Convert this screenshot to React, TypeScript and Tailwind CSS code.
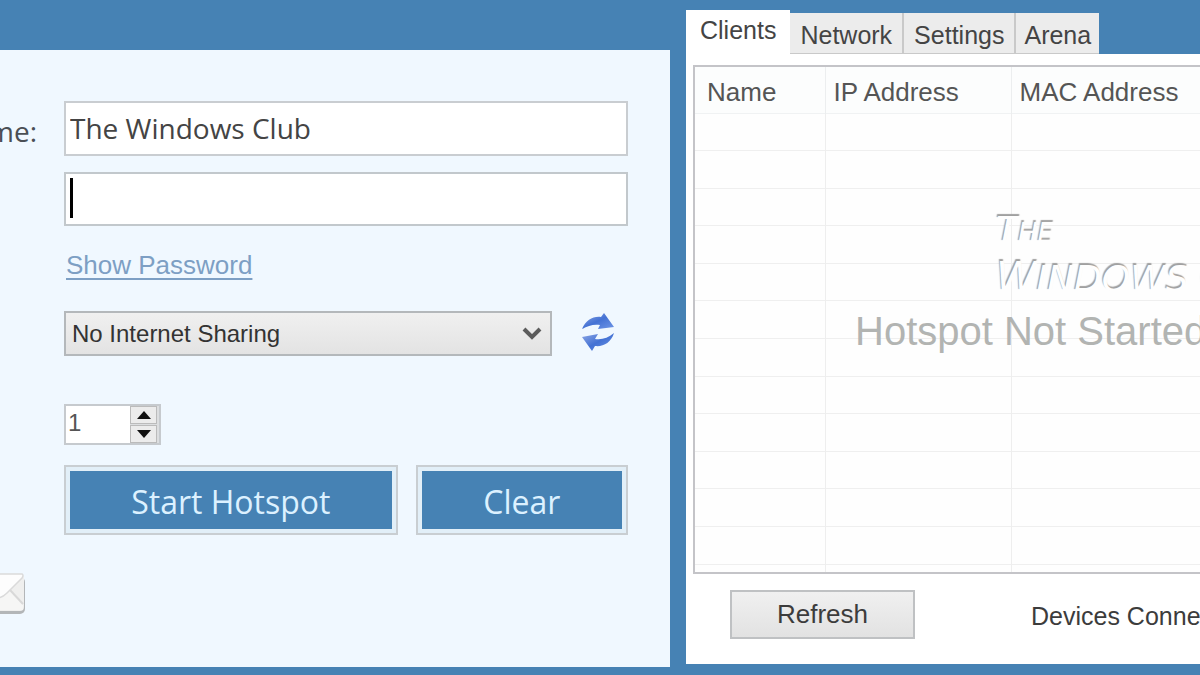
import { useState } from 'react'

const tabs = ['Clients', 'Network', 'Settings', 'Arena']
const emptyRows = Array.from({ length: 12 }, (_, i) => i)

const RefreshArrows = () => (
  <svg viewBox="0 0 36 40" className="h-10 w-9" aria-hidden="true">
    <defs>
      <linearGradient id="arrows" x1="0" y1="0" x2="1" y2="1">
        <stop offset="0" stopColor="#8fa8e6" />
        <stop offset="0.5" stopColor="#4472d4" />
        <stop offset="1" stopColor="#6f96e6" />
      </linearGradient>
    </defs>
    <path
      d="M2 17C6 8 13 4 21 5L24 1L34 15L18 17L20 13C13 12 8 14 2 17Z"
      fill="url(#arrows)"
    />
    <path
      d="M34 21C31 31 23 35 15 34L12 39L2 25L18 22L15 27C22 28 28 26 34 21Z"
      fill="url(#arrows)"
    />
  </svg>
)

const Envelope = () => (
  <svg viewBox="0 0 58 44" className="h-11 w-[58px] shrink-0" aria-hidden="true">
    <rect x="2" y="4" width="55" height="37" rx="5" fill="#b3b6b8" />
    <rect x="1" y="1" width="55" height="37" rx="4" fill="#efefee" />
    <path d="M2 37L18 17L42 17L55 32V37Z" fill="#f6f6f5" />
    <path d="M42 17L55 31" stroke="#d8d8d8" strokeWidth="2" fill="none" />
    <path
      d="M3 1H54Q56 2 54 5L39 20Q34 25 29 25Q24 25 19 20L3 5Z"
      fill="#fdfdfd"
      stroke="#dadada"
      strokeWidth="1.5"
    />
  </svg>
)

const HotspotForm = () => {
  const [name, setName] = useState('The Windows Club')
  const [password, setPassword] = useState('')
  const [limit, setLimit] = useState(1)

  return (
    <form
      className="mt-[50px] flex flex-col bg-[#f0f8ff] pt-[51px]"
      onSubmit={(e) => e.preventDefault()}
    >
      <div className="mr-[42px] flex flex-col">
        <div className="flex items-center">
          <label
            htmlFor="hotspot-name"
            className="mr-[27px] flex w-[37px] shrink-0 justify-end pt-1 font-['Open_Sans',sans-serif] text-[28px] text-[#4a4f55]"
          >
            Name:
          </label>
          <input
            id="hotspot-name"
            value={name}
            onChange={(e) => setName(e.target.value)}
            className="h-[55px] min-w-0 flex-1 border-2 border-[#c9cdd1] bg-white px-1 pb-0.5 font-['Open_Sans',sans-serif] text-[28px] text-[#444] outline-none"
          />
        </div>

        <div className="relative mt-4 ml-16">
          <input
            aria-label="Password"
            type="password"
            value={password}
            onChange={(e) => setPassword(e.target.value)}
            className="block h-[54px] w-full border-2 border-[#c2c8cc] bg-white px-1 text-[26px] outline-none"
          />
          <span className="absolute top-1.5 left-1.5 h-10 w-[3px] bg-black" />
        </div>

        <a
          href="#password"
          className="mt-6 ml-16 self-start pl-0.5 text-[26px] leading-[30px] text-[#7d9fc4] underline decoration-2 underline-offset-4"
        >
          Show Password
        </a>

        <div className="mt-[31px] ml-16 flex items-center">
          <div className="relative w-[488px]">
            <select
              aria-label="Internet sharing"
              className="block h-[45px] w-full appearance-none border-2 border-[#b4b8bb] bg-linear-to-b from-[#f0f0f0] to-[#e3e3e3] px-1.5 text-[24px] text-[#333]"
            >
              <option>No Internet Sharing</option>
            </select>
            <svg
              viewBox="0 0 20 14"
              className="pointer-events-none absolute top-4 right-2.5 h-3.5 w-5"
              aria-hidden="true"
            >
              <path d="M2 2L10 10L18 2" fill="none" stroke="#5c5c5c" strokeWidth="4" />
            </svg>
          </div>
          <button type="button" aria-label="Reload connections" className="ml-7 pb-1">
            <RefreshArrows />
          </button>
        </div>

        <div className="mt-12 ml-16 flex h-[41px] w-[97px] border-2 border-[#c6cace] bg-[#dcdee0]">
          <input
            aria-label="Maximum clients"
            value={limit}
            onChange={(e) => setLimit(Number(e.target.value) || 0)}
            className="w-16 bg-white px-0.5 pb-1 text-[24px] text-[#555] outline-none"
          />
          <div className="flex w-[27px] flex-col gap-px">
            <button
              type="button"
              aria-label="Increase"
              onClick={() => setLimit(limit + 1)}
              className="flex flex-1 items-center justify-center border border-[#bbb] bg-[#ececec]"
            >
              <svg viewBox="0 0 14 8" className="h-2 w-3.5">
                <path d="M0 8L7 0L14 8Z" fill="#111" />
              </svg>
            </button>
            <button
              type="button"
              aria-label="Decrease"
              onClick={() => setLimit(limit - 1)}
              className="flex flex-1 items-center justify-center border border-[#bbb] bg-[#ececec]"
            >
              <svg viewBox="0 0 14 8" className="h-2 w-3.5">
                <path d="M0 0L7 8L14 0Z" fill="#111" />
              </svg>
            </button>
          </div>
        </div>

        <div className="mt-5 ml-16 grid grid-cols-[333fr_212fr] gap-[18px] font-['Open_Sans',sans-serif] text-[32px] text-[#dcf1ff]">
          <button
            type="submit"
            className="h-[70px] border-2 border-[#c9ced2] bg-[#e2eff8] p-1"
          >
            <span className="flex h-full items-center justify-center bg-[#4682b4] pt-1">
              Start Hotspot
            </span>
          </button>
          <button
            type="button"
            onClick={() => {
              setName('')
              setPassword('')
            }}
            className="h-[70px] border-2 border-[#c9ced2] bg-[#e2eff8] p-1"
          >
            <span className="flex h-full items-center justify-center bg-[#4682b4] pt-1">
              Clear
            </span>
          </button>
        </div>
      </div>

      <a
        href="#contact"
        aria-label="Contact"
        className="mt-[38px] flex w-[26px] justify-end"
      >
        <Envelope />
      </a>
    </form>
  )
}

const Watermark = () => (
  <div className="pointer-events-none absolute inset-0 flex flex-col pt-[142px] pl-40 whitespace-nowrap">
    <div className="pl-[141px] font-['DejaVu_Sans',sans-serif] text-[#fefefe] italic [text-shadow:-1px_-2px_1px_#a0a0a0]">
      <p className="text-[26px] leading-[42px]">
        <span className="text-[36px]">T</span>HE
      </p>
      <p className="text-[36px] leading-[46px]">
        <span className="text-[41px]">W</span>INDOWS <span className="text-[41px]">C</span>LUB
      </p>
    </div>
    <p className="text-[40px] leading-[58px] text-[#b2b4b2]">Hotspot Not Started</p>
  </div>
)

const ClientsTable = () => (
  <div className="relative ml-[7px] h-[509px] overflow-hidden border-2 border-r-0 border-[#c4c4c8] bg-[#fefefe]">
    <table className="h-[505px] w-full table-fixed border-collapse text-left text-[26px] text-[#555]">
      <thead>
        <tr className="h-[46px] border-b border-[#f0f2f3] bg-[#fcfdfd]">
          <th className="w-[130px] border-r border-[#eceeef] pt-1.5 pl-3 font-normal">
            Name
          </th>
          <th className="w-[186px] border-r border-[#eceeef] pt-1.5 pl-2 font-normal">
            IP Address
          </th>
          <th className="pt-1.5 pl-2 font-normal">MAC Address</th>
        </tr>
      </thead>
      <tbody>
        {emptyRows.map((row) => (
          <tr key={row} className="border-b border-[#efefef]">
            <td className="border-r border-[#eeeeee]" />
            <td className="border-r border-[#eeeeee]" />
            <td />
          </tr>
        ))}
        <tr className="h-2">
          <td className="border-r border-[#eeeeee]" />
          <td className="border-r border-[#eeeeee]" />
          <td />
        </tr>
      </tbody>
    </table>
    <Watermark />
  </div>
)

const StatusPanel = () => {
  const [active, setActive] = useState('Clients')

  return (
    <section className="mt-2.5 mb-[3px] flex min-w-0 flex-col overflow-hidden">
      <div role="tablist" className="flex h-11 items-end text-[25px]">
        {tabs.map((tab) => (
          <button
            key={tab}
            type="button"
            role="tab"
            aria-selected={active === tab}
            onClick={() => setActive(tab)}
            className={
              active === tab
                ? 'h-11 bg-white px-3.5 pb-0.5 text-[#444]'
                : 'h-[41px] border-r-2 border-b border-[#c9c9c9] bg-[#ececec] px-2.5 pt-1 text-[#444] last:border-r-0 last:px-2'
            }
          >
            {tab}
          </button>
        ))}
      </div>
      <div className="flex-1 bg-white pt-[11px]">
        <ClientsTable />
        <div className="mt-4 ml-11 flex items-center whitespace-nowrap text-[#3c3c3c]">
          <button
            type="button"
            className="h-[49px] w-[185px] shrink-0 border-2 border-[#bfc1c3] bg-linear-to-b from-[#f0f0f0] to-[#e2e2e2] text-[26px]"
          >
            Refresh
          </button>
          <p className="ml-[116px] pt-1 text-[25px]">Devices Connected: 0</p>
        </div>
      </div>
    </section>
  )
}

const App = () => {
  return (
    <main className="grid min-h-screen grid-cols-[670fr_514fr] gap-4 overflow-hidden bg-[#4682b4] pb-2 font-['Liberation_Sans',Arial,sans-serif]">
      <HotspotForm />
      <StatusPanel />
    </main>
  )
}

export default App
